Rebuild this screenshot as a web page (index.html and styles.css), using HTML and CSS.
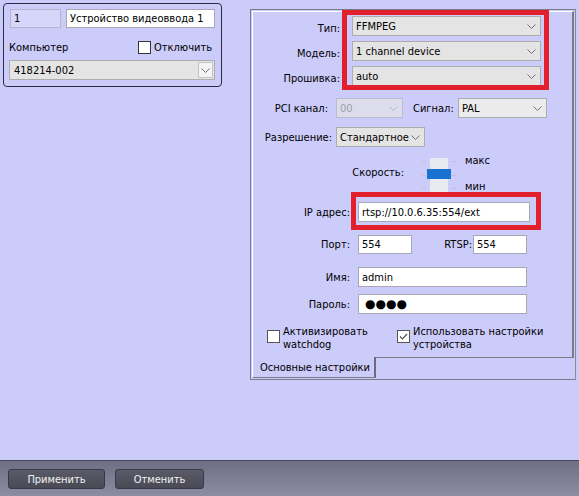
FILE: index.html
```html
<!DOCTYPE html>
<html>
<head>
<meta charset="utf-8">
<link rel="stylesheet" href="styles.css">
</head>
<body>
<div class="app">
  <div class="main">
    <div class="dev-panel">
      <div class="dev-row1">
        <div class="inp inp-id">1</div>
        <div class="inp inp-name">Устройство видеоввода 1</div>
      </div>
      <div class="dev-row2">
        <span class="lbl-pc">Компьютер</span>
        <span class="chk-wrap"><span class="chk"></span><span>Отключить</span></span>
      </div>
      <div class="combo combo-pc">
        <span class="combo-text">418214-002</span>
        <span class="dd-btn"><svg width="9" height="5" viewBox="0 0 9 5"><polyline points="0.5,0.5 4.5,4.5 8.5,0.5" fill="none" stroke="#707070" stroke-width="1"/></svg></span>
      </div>
    </div>

    <div class="frame">
      <div class="tabpage">
        <div class="row row-a">
          <span class="lbl lbl-main">Тип:</span>
          <div class="combo combo-main"><span class="combo-text">FFMPEG</span><svg class="chev" width="9" height="5" viewBox="0 0 9 5"><polyline points="0.5,0.5 4.5,4.5 8.5,0.5" fill="none" stroke="#707070" stroke-width="1"/></svg></div>
        </div>
        <div class="row row-b">
          <span class="lbl lbl-main">Модель:</span>
          <div class="combo combo-main"><span class="combo-text">1 channel device</span><svg class="chev" width="9" height="5" viewBox="0 0 9 5"><polyline points="0.5,0.5 4.5,4.5 8.5,0.5" fill="none" stroke="#707070" stroke-width="1"/></svg></div>
        </div>
        <div class="row row-c">
          <span class="lbl lbl-main">Прошивка:</span>
          <div class="combo combo-main"><span class="combo-text">auto</span><svg class="chev" width="9" height="5" viewBox="0 0 9 5"><polyline points="0.5,0.5 4.5,4.5 8.5,0.5" fill="none" stroke="#707070" stroke-width="1"/></svg></div>
        </div>
        <div class="row row-d">
          <span class="lbl lbl-pci">PCI канал:</span>
          <div class="combo combo-pci disabled"><span class="combo-text">00</span><svg class="chev" width="9" height="5" viewBox="0 0 9 5"><polyline points="0.5,0.5 4.5,4.5 8.5,0.5" fill="none" stroke="#b8b8c4" stroke-width="1"/></svg></div>
          <span class="lbl-sig">Сигнал:</span>
          <div class="combo combo-sig"><span class="combo-text">PAL</span><svg class="chev" width="9" height="5" viewBox="0 0 9 5"><polyline points="0.5,0.5 4.5,4.5 8.5,0.5" fill="none" stroke="#707070" stroke-width="1"/></svg></div>
        </div>
        <div class="row row-e">
          <span class="lbl lbl-res">Разрешение:</span>
          <div class="combo combo-res"><span class="combo-text">Стандартное</span><svg class="chev" width="9" height="5" viewBox="0 0 9 5"><polyline points="0.5,0.5 4.5,4.5 8.5,0.5" fill="none" stroke="#707070" stroke-width="1"/></svg></div>
        </div>
        <div class="row row-f">
          <span class="lbl lbl-speed">Скорость:</span>
          <div class="slider">
            <div class="ticks"><i></i><i></i><i></i></div>
            <div class="track"><div class="thumb"></div></div>
            <div class="ticks"><i></i><i></i><i></i></div>
          </div>
          <div class="slider-labels"><span>макс</span><span>мин</span></div>
        </div>
        <div class="row row-g">
          <span class="lbl lbl-net">IP адрес:</span>
          <div class="inp inp-ip">rtsp://10.0.6.35:554/ext</div>
        </div>
        <div class="row row-h">
          <span class="lbl lbl-net">Порт:</span>
          <div class="inp inp-port">554</div>
          <span class="lbl-rtsp">RTSP:</span>
          <div class="inp inp-port">554</div>
        </div>
        <div class="row row-i">
          <span class="lbl lbl-net">Имя:</span>
          <div class="inp inp-user">admin</div>
        </div>
        <div class="row row-j">
          <span class="lbl lbl-net">Пароль:</span>
          <div class="inp inp-user"><span class="dots">●●●●</span></div>
        </div>
        <div class="row row-k">
          <div class="cb-group cb-group1">
            <span class="chk"></span>
            <span class="cb-text">Активизировать<br>watchdog</span>
          </div>
          <div class="cb-group">
            <span class="chk checked"><svg width="11" height="11" viewBox="0 0 11 11"><polyline points="2,5.5 4.5,8 9,3" fill="none" stroke="#505050" stroke-width="1.2"/></svg></span>
            <span class="cb-text">Использовать настройки<br>устройства</span>
          </div>
        </div>
      </div>
      <div class="tabs"><div class="tab">Основные настройки</div></div>
      <div class="hl hl1"></div>
      <div class="hl hl2"></div>
    </div>
  </div>
  <div class="bottombar">
    <button class="btn btn-apply">Применить</button>
    <button class="btn btn-cancel">Отменить</button>
  </div>
</div>
</body>
</html>
```

FILE: styles.css
```css
* { box-sizing: border-box; }
html, body { margin: 0; padding: 0; }
body {
  width: 579px;
  height: 496px;
  overflow: hidden;
  background: #ccccfa;
  font-family: "DejaVu Sans Condensed", "DejaVu Sans", sans-serif;
  font-stretch: condensed;
  font-size: 11px;
  color: #000;
}
.app { width: 579px; height: 496px; display: flex; flex-direction: column; }
.main { height: 460px; display: flex; align-items: flex-start; }

/* left device panel */
.dev-panel {
  margin: 3px 0 0 3px;
  width: 219px;
  height: 84px;
  border: 1px solid #2c2c48;
  border-radius: 4px;
  padding: 5px 6px 0 5px;
}
.dev-row1 { display: flex; gap: 5px; height: 19px; margin-left: 1px; }
.inp {
  height: 100%;
  border: 1px solid #a8a8b4;
  background: #fff;
  padding-left: 3px;
  display: flex;
  align-items: center;
  white-space: nowrap;
}
.inp-id { width: 51px; background: #d6d6fb; border-color: #b4b4cc; }
.inp-name { width: 149px; }
.dev-row2 { display: flex; align-items: center; height: 14px; margin-top: 12px; }
.lbl-pc { width: 129px; }
.chk-wrap { display: flex; align-items: center; gap: 3px; }
.chk {
  display: inline-flex;
  align-items: center;
  justify-content: center;
  width: 13px;
  height: 13px;
  background: #fff;
  border: 1px solid #333;
  flex: none;
}
.combo {
  height: 20px;
  background: #e4e4e4;
  border: 1px solid #adadad;
  display: flex;
  align-items: center;
  padding-left: 3px;
  white-space: nowrap;
}
.combo-text { flex: 1; }
.combo-pc { margin-top: 6px; width: 206px; padding-left: 4px; padding-right: 1px; }
.dd-btn {
  width: 15px;
  height: 16px;
  background: #f4f4f4;
  border: 1px solid #c4c4c4;
  display: flex;
  align-items: center;
  justify-content: center;
}
.chev { margin-right: 4px; flex: none; }

/* right frame */
.frame {
  position: relative;
  margin: 9px 0 0 28px;
  width: 326px;
  height: 371px;
  border: 1px solid #7a7a88;
  border-right-color: #8a8a96;
}
.tabpage {
  margin: 1px 0 0 1px;
  width: 322px;
  height: 347px;
  border-top: 1px solid #fff;
  border-left: 1px solid #fff;
  border-right: 2px solid #7c7c88;
  border-bottom: 1px solid #7c7c88;
  padding-top: 4px;
}
.row { display: flex; align-items: center; }
.lbl { text-align: right; flex: none; }
.row-a, .row-b, .row-c { height: 20px; }
.row-a { margin-top: 0; }
.row-b, .row-c { margin-top: 5px; }
.lbl-main { width: 87px; padding-top: 4px; }
.combo-main { margin-left: 12px; width: 189px; }

.row-d { margin-top: 12px; height: 20px; }
.lbl-pci { width: 75px; }
.combo-pci { margin-left: 8px; width: 67px; }
.combo.disabled { background: #dcdcec; border-color: #bcbccc; color: #a0a0a8; }
.lbl-sig { margin-left: 10px; width: 45px; }
.combo-sig { width: 89px; background: #ebebeb; }

.row-e { margin-top: 9px; height: 20px; }
.lbl-res { width: 79px; }
.combo-res { margin-left: 4px; width: 89px; }

.row-f { margin-top: 8px; height: 40px; align-items: flex-start; }
.lbl-speed { width: 151px; margin-top: 11px; }
.slider { display: flex; margin-left: 18px; margin-top: 3px; height: 34px; gap: 4px; }
.ticks { width: 4px; display: flex; flex-direction: column; justify-content: space-between; padding: 3px 0; }
.ticks i { display: block; height: 1px; background: #c0c0d0; }
.track { position: relative; width: 18px; height: 34px; background: #e8eaf2; }
.thumb { position: absolute; left: -3px; top: 11px; width: 24px; height: 10px; background: #1a72d0; }
.slider-labels { margin-left: 9px; height: 40px; display: flex; flex-direction: column; justify-content: space-between; line-height: 14px; margin-top: -1px; }

.lbl-net { width: 97px; }
.row-g { margin-top: 7px; height: 20px; }
.inp-ip { margin-left: 8px; width: 172px; }
.row-h { margin-top: 13px; height: 19px; }
.inp-port { margin-left: 8px; width: 54px; }
.lbl-rtsp { margin-left: 26px; width: 35px; text-align: right; padding-right: 1px; }
.lbl-rtsp + .inp-port { margin-left: 0; }
.row-i { margin-top: 13px; height: 20px; }
.row-j { margin-top: 7px; height: 20px; }
.inp-user { margin-left: 8px; width: 169px; }
.dots { font-family: "DejaVu Sans", sans-serif; font-stretch: normal; font-size: 12px; padding-left: 3px; }

.row-k { margin-top: 11px; align-items: flex-start; }
.cb-group { display: flex; align-items: flex-start; gap: 3px; }
.cb-group .chk { margin-top: 5px; border-color: #555; }
.cb-group1 { width: 130px; margin-left: 14px; }
.cb-text { line-height: 13px; }

.tabs { display: flex; margin-left: 1px; }
.tab {
  position: relative;
  margin-top: -1px;
  width: 124px;
  height: 21px;
  background: #ccccfa;
  border-left: 1px solid #fff;
  border-right: 2px solid #6c6c78;
  border-bottom: 1px solid #7c7c88;
  padding-left: 7px;
  display: flex;
  align-items: center;
  white-space: nowrap;
}

.hl { position: absolute; border: 5px solid #e2202b; }
.hl1 { left: 91px; top: 0; width: 207px; height: 80px; }
.hl2 { left: 100px; top: 182px; width: 190px; height: 38px; }

/* bottom bar */
.bottombar {
  height: 36px;
  border-top: 1px solid #4a4a5c;
  background: linear-gradient(#6e6e84, #8c8ca2);
  display: flex;
  align-items: flex-start;
  padding: 8px 0 0 8px;
  gap: 10px;
}
.btn {
  height: 20px;
  border: 1px solid #38384a;
  border-radius: 3px;
  background: linear-gradient(#5a5a68, #4a4a56);
  color: #f2f2f2;
  font-family: inherit;
  font-stretch: condensed;
  font-size: 11px;
  padding: 0;
}
.btn-apply { width: 97px; }
.btn-cancel { width: 89px; }
```
